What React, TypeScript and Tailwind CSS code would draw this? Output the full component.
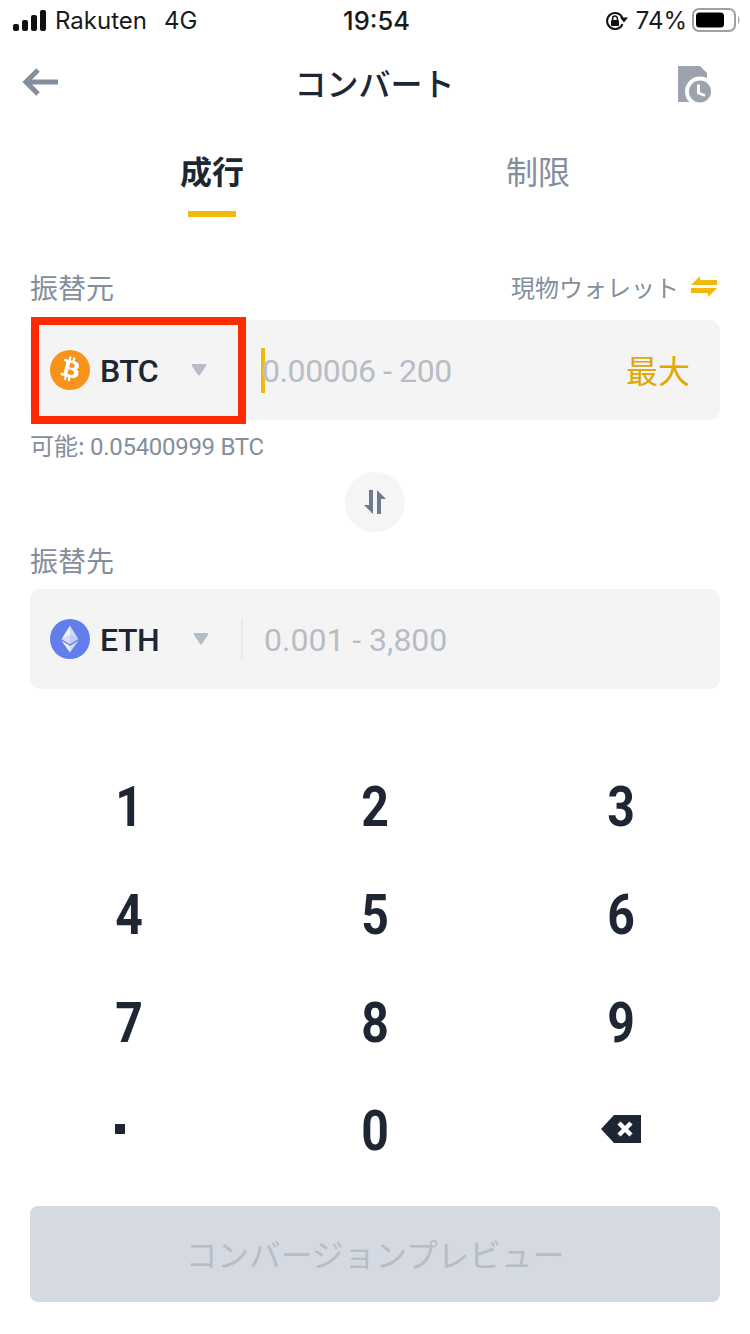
const JP = { fontFamily: '"Noto Sans CJK JP", "Noto Sans", sans-serif' };
const NUM = { fontFamily: 'Roboto, "Noto Sans CJK JP", sans-serif' };

function Caret() {
  return (
    <svg width="16" height="12" viewBox="0 0 16 12">
      <path d="M1 2 Q0 0 2 0 H14 Q16 0 15 2 L9 11 Q8 12 7 11 Z" fill="#B7BDC6" />
    </svg>
  );
}

function BtcIcon() {
  return (
    <svg width="40" height="40" viewBox="0 0 32 32" className="shrink-0">
      <circle cx="16" cy="16" r="16" fill="#F7931A" />
      <path
        fill="#fff"
        transform="translate(0 -1)"
        d="M23.189 14.02c.314-2.096-1.283-3.223-3.465-3.975l.708-2.84-1.728-.43-.69 2.765c-.454-.114-.92-.22-1.385-.326l.695-2.783L15.596 6l-.708 2.839c-.376-.086-.746-.17-1.104-.26l.002-.009-2.384-.595-.46 1.846s1.283.294 1.256.312c.7.175.826.638.805 1.006l-.806 3.235c.048.012.11.03.18.057l-.183-.045-1.13 4.532c-.086.212-.303.531-.793.41.018.025-1.256-.313-1.256-.313l-.858 1.978 2.25.561c.418.105.828.215 1.231.318l-.715 2.872 1.727.43.708-2.84c.472.127.93.245 1.378.357l-.706 2.828 1.728.43.715-2.866c2.948.558 5.164.333 6.097-2.333.752-2.146-.037-3.385-1.588-4.192 1.13-.26 1.98-1.003 2.207-2.538zm-3.95 5.538c-.533 2.147-4.148.986-5.32.695l.95-3.805c1.172.293 4.929.872 4.37 3.11zm.535-5.569c-.487 1.953-3.495.96-4.47.717l.86-3.45c.975.243 4.118.696 3.61 2.733z"
      />
    </svg>
  );
}

function EthIcon() {
  return (
    <svg width="40" height="40" viewBox="0 0 32 32" className="shrink-0">
      <circle cx="16" cy="16" r="16" fill="#627EEA" />
      <g fill="#fff" transform="translate(1.1 1.6) scale(0.9)">
        <path fillOpacity=".7" d="M16.498 4v8.87l7.497 3.35z" />
        <path fillOpacity=".9" d="M16.498 4L9 16.22l7.498-3.35z" />
        <path fillOpacity=".7" d="M16.498 21.968v6.027L24 17.616z" />
        <path fillOpacity=".9" d="M16.498 27.995v-6.028L9 17.616z" />
        <path fillOpacity=".6" d="M16.498 20.573l7.497-4.353-7.497-3.348z" />
        <path fillOpacity=".75" d="M9 16.22l7.498 4.353v-7.701z" />
      </g>
    </svg>
  );
}

function Key({ label }: { label: string }) {
  return (
    <div className="flex h-[108px] items-center justify-center text-[#1E2633]" style={NUM}>
      <span className="inline-block scale-x-[0.86] text-[56px] font-bold">{label}</span>
    </div>
  );
}

export default function App() {
  return (
    <div className="relative flex h-[1334px] w-[750px] flex-col overflow-hidden bg-white">
      {/* status bar */}
      <div className="flex h-[42px] items-center justify-between pl-[13px] pr-[10px] text-[24px] text-[#1a1a1a]" style={{ fontFamily: 'Inter, sans-serif' }}>
        <div className="flex w-[240px] items-center">
          <svg width="34" height="22" viewBox="0 0 34 22" className="mr-[8px]">
            <rect x="0" y="14" width="6" height="7" rx="2" fill="#111" />
            <rect x="9" y="10" width="6" height="11" rx="2" fill="#111" />
            <rect x="18" y="5" width="6" height="16" rx="2" fill="#111" />
            <rect x="27" y="0" width="6" height="21" rx="2" fill="#111" />
          </svg>
          <span>Rakuten</span>
          <span className="ml-[17px]">4G</span>
        </div>
        <span className="text-[25.5px] font-medium">19:54</span>
        <div className="flex w-[240px] items-center justify-end">
          <svg width="23" height="20" viewBox="0 0 23 20" className="mr-[8px]" fill="none">
            <path d="M17.500 7A8 8 0 1 0 17.500 13" stroke="#111" strokeWidth="2" />
            <path d="M15 6.500h8l-4 5z" fill="#111" />
            <rect x="6" y="9" width="8" height="6" rx="1" fill="#111" />
            <path d="M7.600 9V7.400a2.400 2.400 0 0 1 4.800 0V9" stroke="#111" strokeWidth="1.500" />
          </svg>
          <span>74%</span>
          <svg width="48" height="24" viewBox="0 0 48 24" className="ml-[5px] -mt-[2px]" fill="none">
            <rect x="1" y="1" width="42" height="22" rx="6" stroke="#a0a0a0" strokeWidth="2" />
            <rect x="4" y="4.500" width="28" height="15" rx="3.500" fill="#000" />
            <path d="M46 8c2 1 2 7 0 8z" fill="#aaa" />
          </svg>
        </div>
      </div>

      {/* header */}
      <div className="grid h-[84px] grid-cols-[1fr_auto_1fr] items-center pl-[22px] pr-[39px]">
        <svg width="38" height="30" viewBox="0 0 38 30" fill="none" className="-mt-[5px]">
          <path d="M36 15H4M16 3L4 15l12 12" stroke="#848E9C" strokeWidth="5" />
        </svg>
        <span className="-mt-[4px] pl-[16px] text-[32px] font-medium text-[#1E2633]" style={JP}>コンバート</span>
        <svg width="33" height="37" viewBox="0 0 33 37" className="justify-self-end">
          <path d="M0 0H22L29 7V36H0z" fill="#9CA3AF" />
          <circle cx="22" cy="25.500" r="15" fill="#fff" />
          <circle cx="22" cy="25.500" r="11" fill="#9CA3AF" />
          <path d="M20.500 18.500v8.500l6.500 2.500" stroke="#fff" strokeWidth="2.800" fill="none" />
        </svg>
      </div>

      {/* tabs */}
      <div className="flex h-[91px] text-[32px]" style={JP}>
        <div className="flex w-[424px] flex-col items-center pt-[21px]">
          <span className="font-bold leading-[46px] text-[#1E2633]">成行</span>
          <div className="mt-[18px] h-[6px] w-[48px] bg-[#F0B90B]" />
        </div>
        <div className="w-[228px] pt-[21px] text-center leading-[46px] text-[#848E9C]">制限</div>
      </div>

      {/* from */}
      <div className="px-[30px] pt-[50px]">
        <div className="flex h-[40px] items-center justify-between text-[#848E9C]" style={JP}>
          <span className="text-[28px]">振替元</span>
          <div className="flex items-center gap-[12px] pr-[3px]">
            <span className="text-[24px]">現物ウォレット</span>
            <svg width="26" height="24" viewBox="0 0 26 24">
              <path d="M0 10L9 1v4h17v5zM26 13l-9 9v-4H0v-5h26z" fill="#F0B90B" />
            </svg>
          </div>
        </div>
        <div className="mt-[13px] flex h-[100px] items-center rounded-[10px] bg-[#F4F4F4] pl-[20px] pr-[30px]">
          <BtcIcon />
          <span className="ml-[10px] w-[91px] pt-[2px] text-[32px] font-medium tracking-[-0.5px] text-[#1E2633]" style={NUM}>BTC</span>
          <Caret />
          <div className="ml-[54px] h-[45px] w-[4px] bg-[#F0B90B]" />
          <span className="-ml-[3px] flex-1 pt-[2px] text-[32px] tracking-[-0.4px] text-[#B7BDC6]" style={NUM}>0.00006 - 200</span>
          <span className="-mt-[3px] text-[32px] text-[#E0A800]" style={JP}>最大</span>
        </div>
        <div className="mt-[8px] text-[24px] leading-[34px] text-[#848E9C]" style={JP}>
          可能: <span className="tracking-[-0.3px]" style={NUM}>0.05400999 BTC</span>
        </div>
      </div>

      {/* swap */}
      <div className="mt-[8px] flex justify-center">
        <div className="flex h-[60px] w-[60px] items-center justify-center rounded-full bg-[#F5F5F5]">
          <svg width="22" height="24" viewBox="0 0 22 24" fill="#707A8A">
            <path d="M5 0h4v24L0 15h5zM13 0l9 9h-5v15h-4z" />
          </svg>
        </div>
      </div>

      {/* to */}
      <div className="px-[30px] pt-[8px]">
        <div className="flex h-[40px] items-center text-[28px] text-[#848E9C]" style={JP}>振替先</div>
        <div className="mt-[9px] flex h-[100px] items-center rounded-[10px] bg-[#F4F4F4] pl-[20px]">
          <EthIcon />
          <span className="ml-[10px] w-[93px] pt-[2px] text-[32px] font-medium tracking-[-0.5px] text-[#1E2633]" style={NUM}>ETH</span>
          <Caret />
          <div className="ml-[32px] h-[40px] w-[2px] bg-[#E6E8EA]" />
          <span className="ml-[21px] pt-[2px] text-[32px] text-[#B7BDC6]" style={NUM}>0.001 - 3,800</span>
        </div>
      </div>

      {/* keypad */}
      <div className="mt-[64px] grid grid-cols-3 px-[6px]">
        {['1', '2', '3', '4', '5', '6', '7', '8', '9'].map((k) => (
          <Key key={k} label={k} />
        ))}
        <div className="flex h-[108px] items-center justify-center">
          <div className="-ml-[18px] -mt-[4px] h-[10px] w-[10px] bg-[#1E2633]" />
        </div>
        <Key label="0" />
        <div className="flex h-[108px] items-center justify-center">
          <svg width="40" height="28" viewBox="0 0 40 28" className="-mt-[4px]">
            <path d="M13 0h27v28H13L0 14z" fill="#1E2633" />
            <path d="M18 8l12 12M30 8L18 20" stroke="#fff" strokeWidth="4.500" />
          </svg>
        </div>
      </div>

      {/* button */}
      <div className="mx-[30px] mt-[21px] flex h-[96px] items-center justify-center rounded-[8px] bg-[#D5D9E1] text-[31.7px] text-[#B7BDC6]" style={JP}>
        コンバージョンプレビュー
      </div>

      {/* red annotation */}
      <div className="absolute left-[31px] top-[317px] h-[107px] w-[215px] border-[8px] border-[#FF2A00]" />
    </div>
  );
}
